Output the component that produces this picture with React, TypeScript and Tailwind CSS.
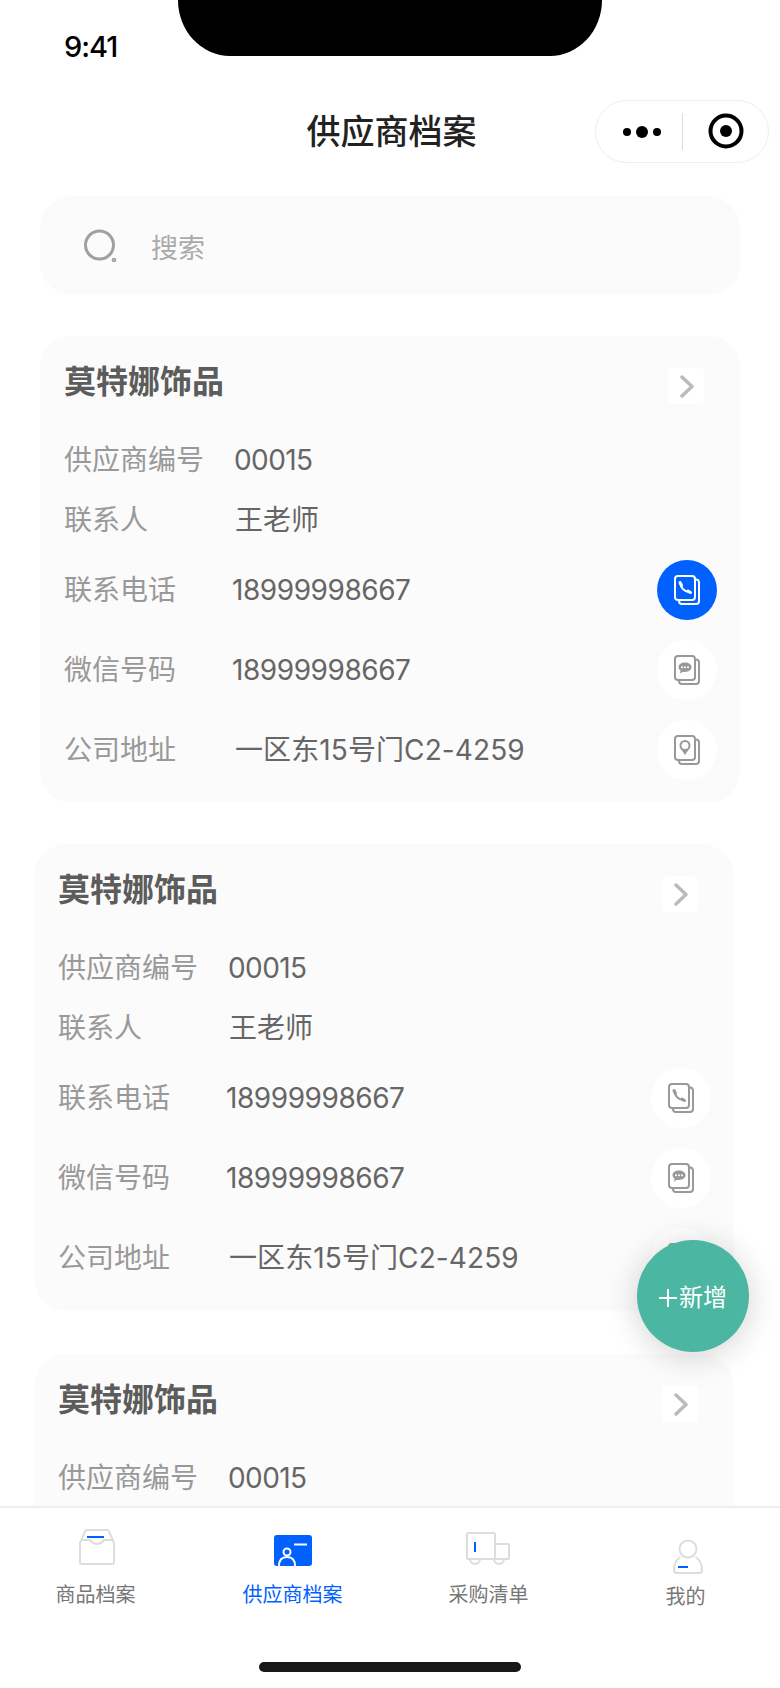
const cjk = "font-['Inter','Noto_Sans_CJK_SC',sans-serif]"

function DocIcon({ color, children }: { color: string; children: React.ReactNode }) {
  return (
    <svg width="26" height="30" viewBox="0 0 26 30" fill="none" stroke={color} strokeWidth="2">
      <rect x="1" y="1" width="20" height="24" rx="3" />
      <path d="M22 4.500a3 3 0 0 1 3 2.500v19a3 3 0 0 1-3 3H8a3 3 0 0 1-3-3" />
      {children}
    </svg>
  )
}

function PhoneGlyph({ color }: { color: string }) {
  return (
    <>
      <path d="M6.500 8.500C6.500 12.500 10.500 17 16 17.500" strokeWidth="2" strokeLinecap="round" />
      <path d="M6 7.500l1.500 3M14 16l2.500 1.500" stroke={color} strokeWidth="3" strokeLinecap="round" />
    </>
  )
}

function ChatGlyph() {
  return (
    <>
      <path d="M11 7.500c3.600 0 6.500 2 6.500 4.700s-2.900 4.700-6.500 4.700c-.7 0-1.400-.1-2-.2L6 18.500l.5-3C5.300 14.700 4.500 13.500 4.500 12.200 4.500 9.500 7.400 7.500 11 7.500z" fill="#999" stroke="none" />
      <circle cx="8" cy="12.200" r="1" fill="#fff" stroke="none" />
      <circle cx="11" cy="12.200" r="1" fill="#fff" stroke="none" />
      <circle cx="14" cy="12.200" r="1" fill="#fff" stroke="none" />
    </>
  )
}

function PinGlyph() {
  return (
    <>
      <circle cx="11" cy="10.500" r="4.500" />
      <path d="M7 14l4 6 4-6z" fill="#999" stroke="none" />
    </>
  )
}

function ActionButton({ type, active }: { type: 'phone' | 'chat' | 'pin'; active?: boolean }) {
  const color = active ? '#ffffff' : '#999999'
  return (
    <div className={`w-[60px] h-[60px] rounded-full flex items-center justify-center shrink-0 ${active ? 'bg-[#0061ff]' : 'bg-white'}`}>
      <DocIcon color={color}>
        {type === 'phone' && <PhoneGlyph color={color} />}
        {type === 'chat' && <ChatGlyph />}
        {type === 'pin' && <PinGlyph />}
      </DocIcon>
    </div>
  )
}

function Row({ label, value, valueClass, tall, children }: { label: string; value: string; valueClass: string; tall?: boolean; children?: React.ReactNode }) {
  return (
    <div className={`flex items-center justify-between pr-[23px] ${tall ? 'h-[60px]' : 'h-[40px]'}`}>
      <div className="flex items-center min-w-0">
        <span className="w-[171px] shrink-0 text-[28px] leading-[40px] text-[#999999]">{label}</span>
        <span className={`text-[28px] leading-[40px] text-[#666666] whitespace-nowrap ${valueClass}`}>{value}</span>
      </div>
      {children}
    </div>
  )
}

function SupplierCard({ className, activePhone, compact }: { className: string; activePhone?: boolean; compact?: boolean }) {
  return (
    <div className={`w-[700px] bg-[#fbfbfb] pl-[24px] pt-[32px] flex flex-col ${compact ? 'rounded-t-[32px]' : 'rounded-[32px] pb-[23px]'} ${className}`}>
      <div className="flex items-center justify-between pr-[36px] h-[36px]">
        <span className="text-[32px] leading-[36px] font-bold text-[#5c5c5c] -mt-[8px]">莫特娜饰品</span>
        <div className="w-[36px] h-[36px] bg-white rounded-[5px] flex items-center justify-center">
          <svg width="14" height="23" viewBox="0 0 14 23" fill="none" stroke="#bbbbbb" strokeWidth="3.500" strokeLinecap="round" strokeLinejoin="round" className="ml-[2px]">
            <path d="M2 2l10 9.500L2 21" />
          </svg>
        </div>
      </div>
      <div className="flex flex-col gap-[20px] mt-[36px]">
        <Row label="供应商编号" value="00015" valueClass="-ml-px tracking-[-0.6px]" />
        {!compact && (
          <>
            <Row label="联系人" value="王老师" valueClass="" />
            <Row tall label="联系电话" value="18999998667" valueClass="-ml-[3px] tracking-[-0.45px]">
              <ActionButton type="phone" active={activePhone} />
            </Row>
            <Row tall label="微信号码" value="18999998667" valueClass="-ml-[3px] tracking-[-0.45px]">
              <ActionButton type="chat" />
            </Row>
            <Row tall label="公司地址" value="一区东15号门C2-4259" valueClass="tracking-[0.1px]">
              <ActionButton type="pin" />
            </Row>
          </>
        )}
      </div>
    </div>
  )
}

function TabBar() {
  return (
    <div className="h-[182px] shrink-0 bg-white border-t-2 border-[#eeeeee] grid grid-cols-4 relative">
      <div className="flex flex-col items-center pt-[21px]">
        <svg width="36" height="36" viewBox="0 0 36 36" fill="none" stroke="#dddddd" strokeWidth="2" className="-ml-[2px]">
          <path d="M8 1h20a2 2 0 0 1 2 1.500L35 14v19a2 2 0 0 1-2 2H3a2 2 0 0 1-2-2V14L6 2.500A2 2 0 0 1 8 1z" />
          <path d="M2 11h9q7 8 14 0h9" />
          <path d="M8 8h17" stroke="#0061ff" />
        </svg>
        <span className="text-[20px] leading-[28px] text-[#777777] mt-[16px] -ml-[4px]">商品档案</span>
      </div>
      <div className="flex flex-col items-center pt-[27px]">
        <svg width="38" height="31" viewBox="0 0 38 31">
          <rect width="38" height="31" rx="3" fill="#0061ff" />
          <path d="M20 9.500h13" stroke="#fff" strokeWidth="2" />
          <circle cx="13" cy="17" r="3.500" fill="none" stroke="#fff" strokeWidth="2" />
          <path d="M5 31c0-6 3-9 8-9s8 3 8 9" fill="none" stroke="#fff" strokeWidth="2" />
        </svg>
        <span className="text-[20px] leading-[28px] text-[#0061ff] mt-[15px]">供应商档案</span>
      </div>
      <div className="flex flex-col items-center pt-[24px]">
        <svg width="44" height="33" viewBox="0 0 44 33" fill="none" stroke="#dddddd" strokeWidth="2">
          <rect x="1" y="1" width="28" height="26" rx="1.500" />
          <path d="M29 12h13a1 1 0 0 1 1 1v13a1 1 0 0 1-1 1H29" />
          <path d="M4 27a5 5 0 0 0 10 0M28 27a5 5 0 0 0 10 0" />
          <path d="M9 10v10" stroke="#0061ff" />
        </svg>
        <span className="text-[20px] leading-[28px] text-[#777777] mt-[16px] ml-[2px]">采购清单</span>
      </div>
      <div className="flex flex-col items-center pt-[31px]">
        <svg width="30" height="35" viewBox="0 0 30 35" fill="none" stroke="#dddddd" strokeWidth="2" className="ml-[10px]">
          <circle cx="15" cy="10" r="8.500" />
          <path d="M7.500 18C3.500 20.500 1 25 1 31a3 3 0 0 0 3 3h22a3 3 0 0 0 3-3c0-6-2.500-10.500-6.500-13" />
          <path d="M5 28h10" stroke="#0061ff" />
        </svg>
        <span className="text-[20px] leading-[28px] text-[#777777] mt-[9px] ml-[6px]">我的</span>
      </div>
      <div className="absolute left-[259px] bottom-[16px] w-[262px] h-[10px] rounded-full bg-[#181818]" />
    </div>
  )
}

export default function App() {
  return (
    <div className={`w-[780px] h-[1688px] bg-white relative overflow-hidden flex flex-col ${cjk}`}>
      {/* 狀態列 */}
      <div className="h-[100px] shrink-0 relative">
        <div className="absolute left-[178px] top-0 w-[424px] h-[56px] bg-black [border-radius:0_0_52px_52px/0_0_56px_56px]" />
        <span className="absolute left-[64px] top-[29px] text-[29px] leading-[36px] font-medium text-black tracking-[-1px]">9:41</span>
      </div>

      {/* 標題列 */}
      <div className="h-[63px] shrink-0 relative flex items-center justify-center">
        <span className="text-[34px] leading-[48px] font-medium text-[#222222] ml-[3px]">供应商档案</span>
        <div className="absolute left-[595px] top-0 w-[174px] h-[63px] rounded-full border border-[#eeeeee] bg-white flex items-center">
          <div className="w-[86px] flex items-center justify-center">
            <svg width="40" height="12" viewBox="0 0 40 12" fill="#000000" className="ml-[5px]">
              <circle cx="5" cy="6" r="4" />
              <circle cx="20" cy="6" r="6" />
              <circle cx="35" cy="6" r="4" />
            </svg>
          </div>
          <div className="w-px h-[37px] bg-[#dddddd]" />
          <div className="flex-1 flex items-center justify-center">
            <svg width="36" height="36" viewBox="0 0 36 36" fill="none" className="-mt-[2px]">
              <circle cx="18" cy="18" r="15.500" stroke="#000000" strokeWidth="4" />
              <circle cx="18" cy="18" r="6" fill="#000000" />
            </svg>
          </div>
        </div>
      </div>

      <div className="flex-1 min-h-0 overflow-hidden flex flex-col">
        {/* 搜尋 */}
        <div className="ml-[40px] mt-[33px] w-[700px] h-[99px] shrink-0 bg-[#fbfbfb] rounded-[32px] flex items-center pl-[44px]">
          <svg width="33" height="33" viewBox="0 0 33 33" fill="none" stroke="#a0a0a0" strokeWidth="3">
            <circle cx="15.500" cy="16" r="14" />
            <circle cx="30" cy="31" r="0.800" fill="#a0a0a0" />
          </svg>
          <span className="ml-[34px] mt-[6px] text-[27px] leading-[40px] text-[#aaaaaa]">搜索</span>
        </div>

        <SupplierCard className="ml-[40px] mt-[41px] shrink-0" activePhone />
        <SupplierCard className="ml-[34px] mt-[41px] shrink-0" />
        <SupplierCard className="ml-[34px] mt-[43px] flex-1 min-h-0" compact />
      </div>

      <TabBar />

      {/* 新增按鈕 */}
      <div className="absolute left-[637px] top-[1240px] w-[112px] h-[112px] rounded-full bg-[#4bb6a1] shadow-[0_4px_32px_rgba(0,0,0,0.18)] flex items-center justify-center text-white text-[24px] leading-[32px]">
        <svg width="18" height="18" viewBox="0 0 18 18" stroke="#ffffff" strokeWidth="2" className="mr-[2px] mt-[4px]">
          <path d="M9 0v18M0 9h18" />
        </svg>
        <span className="mt-[4px]">新增</span>
      </div>
    </div>
  )
}
